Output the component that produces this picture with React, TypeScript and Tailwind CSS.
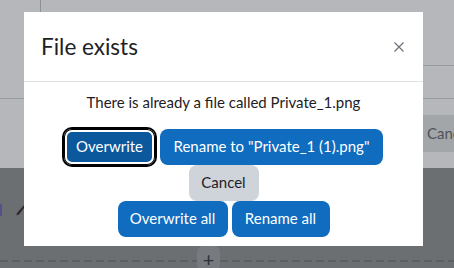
const Btn = ({ label, w, variant = 'primary', focused = false }: { label: string; w: string; variant?: 'primary' | 'secondary'; focused?: boolean }) => {
  const base = 'h-[36px] shrink-0 rounded-lg text-[15px] leading-none flex items-center justify-center whitespace-nowrap'
  const color =
    variant === 'secondary'
      ? 'bg-[#ced4da] text-[#1d2125]'
      : focused
        ? 'bg-[#0c589c] text-white shadow-[inset_0_0_0_1px_#000,inset_0_0_0_3px_#fff,0_0_0_2px_#000]'
        : 'bg-[#0f6cbf] text-white'
  return <button className={`${base} ${color} ${w}`}>{label}</button>
}

export default function App() {
  return (
    <div className="relative w-[454px] h-[268px] overflow-hidden bg-[#b5b7ba] font-['Lato','Liberation_Sans',sans-serif]">
      {/* page behind the backdrop */}
      <div className="flex h-[66px]">
        <div className="w-[41px] border-r border-[#8e9194]" />
        <div className="flex-1 border-b border-[#999c9f]" />
      </div>
      <div className="h-[33px] border-b border-[#999c9f]" />
      <div className="h-[69px] pt-[16px]">
        <div className="ml-[415px] h-[37px] w-[80px] bg-[#a3a6a9] text-[#4f5357] text-[15px] flex items-center pl-[12px]">Cancel</div>
      </div>
      <div className="h-[100px] bg-[#6c6f72] pt-[6px] flex flex-col">
        <div className="h-[2px] bg-[repeating-linear-gradient(90deg,#5d6063_0_8px,transparent_8px_12px)]" />
        <div className="flex items-center gap-[14px] mt-[30px] h-[14px]">
          <div className="w-[2px] h-[12px] bg-[#55508a]" />
          <svg width="10" height="12" viewBox="0 0 10 12">
            <path d="M8.5 0.5 L9.5 2 L3 10.5 L0.5 11.5 L1 9 Z" fill="#2f2a2a" />
          </svg>
        </div>
        <div className="mt-[30px] flex items-start">
          <div className="mt-[14px] w-[197px] h-[2px] bg-[repeating-linear-gradient(90deg,#5d6063_0_8px,transparent_8px_12px)]" />
          <div className="w-[23px] h-[24px] rounded-md bg-[#777b7f] flex items-start justify-center pt-[3px] text-[#2c3136] text-[20px] leading-none">+</div>
          <div className="mt-[14px] flex-1 h-[2px] bg-[repeating-linear-gradient(90deg,#5d6063_0_8px,transparent_8px_12px)]" />
        </div>
      </div>

      {/* modal */}
      <div className="absolute left-[24px] top-[12px] w-[399px] h-[234px] bg-white flex flex-col">
        <div className="h-[70px] shrink-0 border-b border-[#dee2e6] flex items-center justify-between pl-[17px] pr-[19px]">
          <h5 className="text-[22.5px] text-[#1d2125] leading-[1.2]">File exists</h5>
          <svg width="10" height="10" viewBox="0 0 10 10" aria-label="Close">
            <path d="M0.5 0.5 L9.5 9.5 M9.5 0.5 L0.5 9.5" stroke="#6a737b" strokeWidth="1.2" />
          </svg>
        </div>
        <div className="flex flex-col items-center pt-[9px]">
          <p className="text-[15px] leading-[22.5px] text-[#1d2125]">There is already a file called Private_1.png</p>
          <div className="mt-[15px] flex gap-[5px]">
            <Btn label="Overwrite" w="w-[91px]" focused />
            <Btn label='Rename to "Private_1 (1).png"' w="w-[223px]" />
          </div>
          <div className="flex">
            <Btn label="Cancel" w="w-[70px]" variant="secondary" />
          </div>
          <div className="flex gap-[4px]">
            <Btn label="Overwrite all" w="w-[110px]" />
            <Btn label="Rename all" w="w-[98px]" />
          </div>
        </div>
      </div>
    </div>
  )
}
